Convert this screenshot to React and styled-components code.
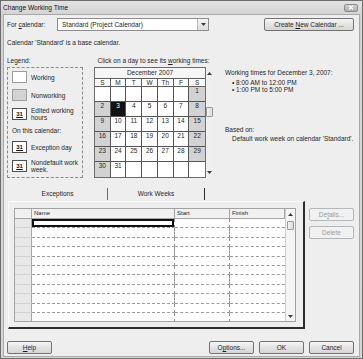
import React from "react";
import styled, { createGlobalStyle } from "styled-components";

const Global = createGlobalStyle`
  html, body { margin: 0; padding: 0; background: #ffffff; }
  body {
    font-family: "Liberation Sans", Arial, sans-serif;
    font-size: 6.5px;
    color: #1e1e1e;
  }
  * { box-sizing: border-box; }
`;

const Window = styled.div`
  width: 363px;
  height: 359px;
  border: 1px solid #6d6d6d;
  background: linear-gradient(#e2e2e2, #d3d3d3 14px, #d6d6d6);
  display: flex;
  flex-direction: column;
`;

const TitleBar = styled.div`
  height: 13px;
  flex: 0 0 13px;
  display: flex;
  align-items: center;
  justify-content: space-between;
  padding: 0 4px 0 2px;
  font-size: 6.6px;
  color: #111;
`;

const CloseButton = styled.div`
  width: 14px;
  height: 8px;
  border: 1px solid #8c8c8c;
  border-radius: 2px;
  background: linear-gradient(#d2d2d2, #ababab);
  display: flex;
  align-items: center;
  justify-content: center;
`;

const Body = styled.div`
  flex: 1;
  margin: 0 2px 1px;
  border: 1px solid #a9a9a9;
  background: #eeeeee;
  padding: 3px 5px 0 3px;
  display: flex;
  flex-direction: column;
`;

const U = styled.span`
  text-decoration: underline;
`;

const CalendarRow = styled.div`
  display: flex;
  align-items: center;
  height: 13px;
`;

const FieldLabel = styled.div`
  width: 50px;
  white-space: nowrap;
`;

const Select = styled.div`
  width: 152px;
  height: 13px;
  border: 1px solid #8e8e8e;
  background: #ffffff;
  display: flex;
  align-items: center;
  justify-content: space-between;
  padding-left: 4px;
`;

const SelectArrow = styled.div`
  width: 11px;
  height: 11px;
  border-left: 1px solid #b5b5b5;
  background: linear-gradient(#f4f4f4, #dedede);
  display: flex;
  align-items: center;
  justify-content: center;
`;

const Button = styled.div`
  width: ${(p) => p.$w || 45}px;
  height: 13px;
  border: 1px solid ${(p) => (p.$disabled ? "#b4b7ba" : "#727272")};
  border-radius: 2px;
  background: ${(p) =>
    p.$disabled ? "#f1f1f1" : "linear-gradient(#f6f6f6, #e3e3e3 50%, #d6d6d6)"};
  color: ${(p) => (p.$disabled ? "#9b9b9b" : "#1e1e1e")};
  display: flex;
  align-items: center;
  justify-content: center;
  white-space: nowrap;
  margin-left: ${(p) => (p.$push ? "auto" : "0")};
`;

const ButtonLabel = styled.span`
  white-space: pre;
`;

const InfoLine = styled.div`
  margin-top: 8px;
  line-height: 8px;
`;

const MainSection = styled.div`
  display: flex;
  margin-top: 10px;
`;

const SectionLabel = styled.div`
  line-height: 8px;
  margin-bottom: 2px;
  white-space: nowrap;
  text-align: ${(p) => (p.$center ? "center" : "left")};
`;

const LegendColumn = styled.div`
  width: 76px;
  display: flex;
  flex-direction: column;
`;

const LegendBox = styled.div`
  height: 111px;
  border: 1px dashed #8a8a8a;
  padding: 3px 0 0 4px;
  display: flex;
  flex-direction: column;
  gap: 6px;
`;

const LegendItem = styled.div`
  display: flex;
  align-items: center;
  gap: 4px;
  min-height: 12px;
`;

const Swatch = styled.div`
  width: 15px;
  height: 12px;
  flex: 0 0 15px;
  border: 1px solid ${(p) => (p.$mark ? "#4e4e4e" : "#9c9c9c")};
  background: ${(p) => (p.$gray ? "#d3d3d3" : "#ffffff")};
  display: flex;
  align-items: center;
  justify-content: center;
  font-weight: bold;
  font-size: 6px;
  text-decoration: underline;
  color: #111;
`;

const LegendText = styled.div`
  max-width: 51px;
  line-height: 7px;
`;

const LegendNote = styled.div`
  line-height: 8px;
`;

const CalendarColumn = styled.div`
  width: 119px;
  margin-left: 11px;
  display: flex;
  flex-direction: column;
`;

const CalendarBox = styled.div`
  display: flex;
  height: 111px;
`;

const Month = styled.div`
  width: 112px;
  border: 1px solid #6c6c6c;
  background: #ffffff;
  display: flex;
  flex-direction: column;
`;

const MonthTitle = styled.div`
  height: 11px;
  line-height: 10px;
  text-align: center;
  border-bottom: 1px solid #5e5e5e;
  background: #f6f6f6;
`;

const DayGrid = styled.div`
  display: grid;
  grid-template-columns: repeat(7, 1fr);
  grid-auto-rows: 15px;
  grid-template-rows: 8px;
`;

const DayName = styled.div`
  height: 8px;
  line-height: 7px;
  text-align: center;
  border-right: ${(p) => (p.$last ? "none" : "1px solid #5e5e5e")};
  border-bottom: 1px solid #5e5e5e;
`;

const DateCell = styled.div`
  height: 15px;
  line-height: 8px;
  text-align: center;
  border-right: ${(p) => (p.$last ? "none" : "1px solid #555555")};
  border-bottom: ${(p) => (p.$bottom ? "none" : "1px solid #555555")};
  background: ${(p) => (p.$selected ? "#111111" : p.$weekend ? "#d2d2d2" : "#ffffff")};
  color: ${(p) => (p.$selected ? "#ffffff" : "#1e1e1e")};
`;

const ScrollBar = styled.div`
  width: ${(p) => p.$w}px;
  flex: 0 0 ${(p) => p.$w}px;
  display: flex;
  flex-direction: column;
  background: ${(p) => p.$bg || "#f0f0f0"};
  border-left: ${(p) => (p.$line ? "1px solid #cfcfcf" : "none")};
`;

const ScrollArrow = styled.div`
  height: ${(p) => p.$h || 10}px;
  display: flex;
  align-items: center;
  justify-content: center;
`;

const ScrollGap = styled.div`
  flex: ${(p) => (p.$fill ? "1" : `0 0 ${p.$h}px`)};
`;

const Thumb = styled.div`
  height: ${(p) => p.$h}px;
  margin: 0 ${(p) => p.$m || 0}px;
  border: 1px solid #9a9a9a;
  border-radius: 1px;
  background: linear-gradient(90deg, #f4f4f4, #dcdcdc);
`;

const InfoColumn = styled.div`
  margin-left: 12px;
  padding-top: 12px;
  display: flex;
  flex-direction: column;
`;

const InfoText = styled.div`
  line-height: 8px;
  margin-top: ${(p) => p.$mt || 0}px;
  padding-left: ${(p) => p.$indent || 0}px;
  white-space: nowrap;
`;

const Bullet = styled.div`
  line-height: 7px;
  padding-left: 7px;
  white-space: nowrap;
`;

const BulletList = styled.div`
  margin-top: 2px;
`;

const MiddleSection = styled.div`
  display: flex;
  margin-top: 8px;
`;

const TabArea = styled.div`
  width: 297px;
  margin-left: 1px;
  display: flex;
  flex-direction: column;
`;

const TabBar = styled.div`
  height: 15px;
  display: flex;
  align-items: flex-start;
`;

const Tab = styled.div`
  width: ${(p) => p.$w}px;
  height: 12px;
  margin-top: 2px;
  line-height: 11px;
  text-align: center;
  border-right: 1px solid ${(p) => p.$edge};
`;

const Panel = styled.div`
  height: 128px;
  border-style: solid;
  border-width: 1px 2px 2px 1px;
  border-color: #fafafa #2c2c2c #2c2c2c #fafafa;
  padding: 6px 7px 5px 5px;
`;

const TableFrame = styled.div`
  height: 114px;
  border: 1px solid #a2a2a2;
  display: flex;
  overflow: hidden;
  background: #ffffff;
`;

const DataGrid = styled.div`
  flex: 1;
  display: grid;
  grid-template-columns: 17px 143px 55px 1fr;
  grid-template-rows: 10px;
  grid-auto-rows: 9.4px;
  align-content: start;
`;

const HeadCell = styled.div`
  background: #f1f1f1;
  border-right: 1px solid #a5a5a5;
  border-bottom: 1px solid #a5a5a5;
  padding-left: 2px;
  line-height: 9px;
  font-size: 6px;
`;

const RowHead = styled.div`
  background: #e8e8e8;
  border-right: 1px solid #a5a5a5;
  border-bottom: 1px solid #d2d2d2;
`;

const Cell = styled.div`
  background: #ffffff;
  border-right: ${(p) => (p.$last ? "none" : "1px dashed #8f8f8f")};
  border-bottom: 1px dashed #9d9d9d;
  box-shadow: ${(p) => (p.$selected ? "inset 0 0 0 2px #111111" : "none")};
`;

const SideButtons = styled.div`
  margin-left: 4px;
  padding-top: 22px;
  display: flex;
  flex-direction: column;
  gap: 5px;
`;

const FooterRow = styled.div`
  display: flex;
  gap: 5px;
  margin-top: 12px;
`;

const ArrowUp = () => (
  <svg width="5" height="3" viewBox="0 0 5 3">
    <path d="M0 3 L2.5 0 L5 3 Z" fill="#3c3c3c" />
  </svg>
);

const ArrowDown = ({ w = 5, h = 3 }) => (
  <svg width={w} height={h} viewBox="0 0 5 3">
    <path d="M0 0 L5 0 L2.5 3 Z" fill="#3c3c3c" />
  </svg>
);

const dayNames = ["S", "M", "T", "W", "Th", "F", "S"];
const weeks = [
  [null, null, null, null, null, null, 1],
  [2, 3, 4, 5, 6, 7, 8],
  [9, 10, 11, 12, 13, 14, 15],
  [16, 17, 18, 19, 20, 21, 22],
  [23, 24, 25, 26, 27, 28, 29],
  [30, 31, null, null, null, null, null],
];

const legendTop = [
  { key: "w", label: "Working" },
  { key: "n", label: "Nonworking", gray: true },
  { key: "e", label: "Edited working hours", mark: true },
];
const legendBottom = [
  { key: "x", label: "Exception day", mark: true },
  { key: "d", label: "Nondefault work week.", mark: true },
];

const LegendEntry = ({ item }) => (
  <LegendItem>
    <Swatch $gray={item.gray} $mark={item.mark}>
      {item.mark ? "31" : ""}
    </Swatch>
    <LegendText>{item.label}</LegendText>
  </LegendItem>
);

export default function App() {
  const rows = Array.from({ length: 11 }, (_, i) => i);
  return (
    <>
      <Global />
      <Window>
        <TitleBar>
          <span>Change Working Time</span>
          <CloseButton>
            <svg width="6" height="5" viewBox="0 0 6 5">
              <path d="M1 0.5 L5 4.5 M5 0.5 L1 4.5" stroke="#f7f7f7" strokeWidth="1.3" />
            </svg>
          </CloseButton>
        </TitleBar>
        <Body>
          <CalendarRow>
            <FieldLabel>
              For <U>c</U>alendar:
            </FieldLabel>
            <Select>
              <span>Standard (Project Calendar)</span>
              <SelectArrow>
                <ArrowDown />
              </SelectArrow>
            </Select>
            <Button $w={90} $push>
              <ButtonLabel>
                Create <U>N</U>ew Calendar ...
              </ButtonLabel>
            </Button>
          </CalendarRow>

          <InfoLine>Calendar 'Standard' is a base calendar.</InfoLine>

          <MainSection>
            <LegendColumn>
              <SectionLabel>Legend:</SectionLabel>
              <LegendBox>
                {legendTop.map((it) => (
                  <LegendEntry key={it.key} item={it} />
                ))}
                <LegendNote>On this calendar:</LegendNote>
                {legendBottom.map((it) => (
                  <LegendEntry key={it.key} item={it} />
                ))}
              </LegendBox>
            </LegendColumn>

            <CalendarColumn>
              <SectionLabel $center>
                Click on a day to see its <U>w</U>orking times:
              </SectionLabel>
              <CalendarBox>
                <Month>
                  <MonthTitle>December 2007</MonthTitle>
                  <DayGrid>
                    {dayNames.map((d, i) => (
                      <DayName key={i} $last={i === 6}>
                        {d}
                      </DayName>
                    ))}
                    {weeks.map((week, wi) =>
                      week.map((v, di) => (
                        <DateCell
                          key={`${wi}-${di}`}
                          $last={di === 6}
                          $bottom={wi === weeks.length - 1}
                          $weekend={v !== null && (di === 0 || di === 6)}
                          $selected={v === 3}
                        >
                          {v ?? ""}
                        </DateCell>
                      ))
                    )}
                  </DayGrid>
                </Month>
                <ScrollBar $w={7} $bg="#efefef">
                  <ScrollArrow $h={12}>
                    <ArrowUp />
                  </ScrollArrow>
                  <ScrollGap $h={28} />
                  <Thumb $h={10} />
                  <ScrollGap $fill />
                  <ScrollArrow $h={12}>
                    <ArrowDown />
                  </ScrollArrow>
                </ScrollBar>
              </CalendarBox>
            </CalendarColumn>

            <InfoColumn>
              <InfoText>Working times for December 3, 2007:</InfoText>
              <BulletList>
                <Bullet>• 8:00 AM to 12:00 PM</Bullet>
                <Bullet>• 1:00 PM to 5:00 PM</Bullet>
              </BulletList>
              <InfoText $mt={33}>Based on:</InfoText>
              <InfoText $mt={1} $indent={7}>
                Default work week on calendar 'Standard'.
              </InfoText>
            </InfoColumn>
          </MainSection>

          <MiddleSection>
            <TabArea>
              <TabBar>
                <Tab $w={100} $edge="#6a6a6a">Exceptions</Tab>
                <Tab $w={97} $edge="#2e2e2e">Work Weeks</Tab>
              </TabBar>
              <Panel>
                <TableFrame>
                  <DataGrid>
                    <HeadCell />
                    <HeadCell>Name</HeadCell>
                    <HeadCell>Start</HeadCell>
                    <HeadCell>Finish</HeadCell>
                    {rows.map((r) => (
                      <React.Fragment key={r}>
                        <RowHead />
                        <Cell $selected={r === 0} />
                        <Cell />
                        <Cell $last />
                      </React.Fragment>
                    ))}
                  </DataGrid>
                  <ScrollBar $w={10} $bg="#f4f4f4" $line>
                    <ScrollArrow $h={11}>
                      <ArrowUp />
                    </ScrollArrow>
                    <ScrollGap $h={1} />
                    <Thumb $h={9} $m={1} />
                    <ScrollGap $fill />
                    <ScrollArrow $h={10}>
                      <ArrowDown />
                    </ScrollArrow>
                  </ScrollBar>
                </TableFrame>
              </Panel>
            </TabArea>
            <SideButtons>
              <Button $disabled>
                <ButtonLabel>
                  De<U>t</U>ails...
                </ButtonLabel>
              </Button>
              <Button $disabled>
                <ButtonLabel>Delete</ButtonLabel>
              </Button>
            </SideButtons>
          </MiddleSection>

          <FooterRow>
            <Button>
              <ButtonLabel>
                <U>H</U>elp
              </ButtonLabel>
            </Button>
            <Button $push>
              <ButtonLabel>
                O<U>p</U>tions...
              </ButtonLabel>
            </Button>
            <Button>
              <ButtonLabel>OK</ButtonLabel>
            </Button>
            <Button>
              <ButtonLabel>Cancel</ButtonLabel>
            </Button>
          </FooterRow>
        </Body>
      </Window>
    </>
  );
}
